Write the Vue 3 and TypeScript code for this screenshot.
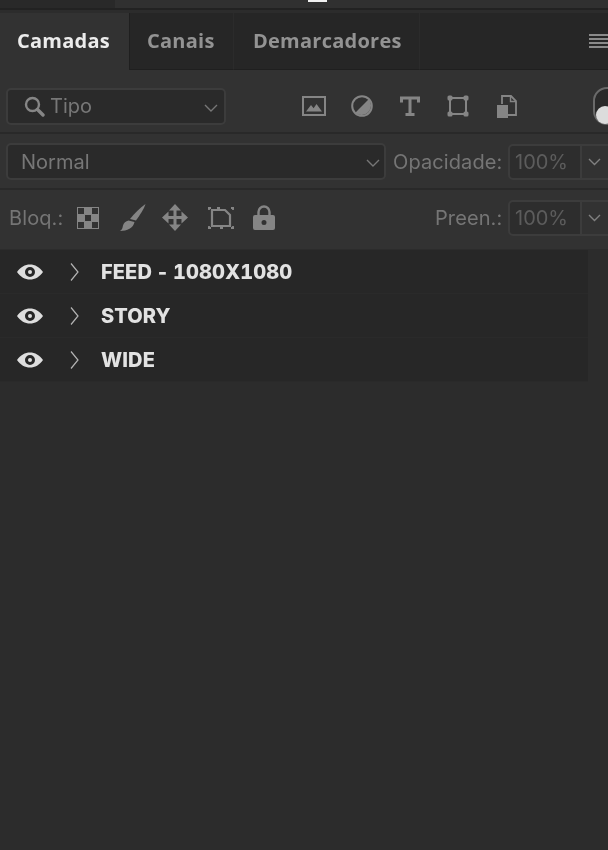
<script setup lang="ts">
// Layers panel: tabs, filter row, blend row, lock row and the layer list.
const tabs = [
  { label: "Camadas", width: 130, active: true },
  { label: "Canais", width: 104, active: false },
  { label: "Demarcadores", width: 186, active: false },
];

const layers = ["FEED - 1080X1080", "STORY", "WIDE"];

const checkerCells = [
  [0, 0], [14, 0], [7, 7], [0, 14], [14, 14],
];
</script>

<template>
  <div class="panel">
    <div class="top-strip">
      <div class="strip-dark" />
      <div class="strip-handle" />
    </div>

    <div class="tabbar">
      <div
        v-for="tab in tabs"
        :key="tab.label"
        class="tab"
        :class="{ active: tab.active }"
        :style="{ width: `${tab.width}px` }"
      >
        {{ tab.label }}
      </div>
      <div class="tab-rest">
        <div class="menu-icon"><i /><i /><i /><i /></div>
      </div>
    </div>

    <div class="row filter-row">
      <div class="select filter-select">
        <svg class="search" width="21" height="21" viewBox="0 0 21 21" fill="none">
          <circle cx="8.500" cy="8.500" r="6.500" stroke="#868686" stroke-width="2.400" />
          <path d="M13.500 13.500 19 19" stroke="#868686" stroke-width="3.400" stroke-linecap="round" />
        </svg>
        <span class="muted">Tipo</span>
        <svg class="chev" width="14" height="8" viewBox="0 0 14 8" fill="none">
          <path d="M1 1l6 6 6-6" stroke="#777" stroke-width="1.400" />
        </svg>
      </div>

      <div class="filter-icons">
        <svg width="24" height="20" viewBox="0 0 24 20" fill="none">
          <rect x="1" y="1" width="22" height="18" stroke="#858585" stroke-width="2" />
          <path d="M4 15.500 9 9l2.600 3.200L14.500 8l5.500 7.500z" fill="#858585" />
        </svg>
        <svg width="22" height="22" viewBox="0 0 22 22" fill="none">
          <circle cx="11" cy="11" r="9.800" stroke="#858585" stroke-width="2" />
          <path d="M17.700 4.300A9.500 9.500 0 0 1 4.300 17.700z" fill="#858585" />
        </svg>
        <svg width="20" height="20" viewBox="0 0 20 20" fill="none">
          <path d="M1.500 6.500V2h17v4.500M10 2v16.500M5.500 18.500h9" stroke="#858585" stroke-width="3" />
        </svg>
        <svg width="22" height="22" viewBox="0 0 22 22" fill="none">
          <rect x="3" y="3" width="16" height="16" stroke="#858585" stroke-width="2" />
          <rect x="0.500" y="0.500" width="5" height="5" rx="1.500" fill="#858585" />
          <rect x="16.500" y="0.500" width="5" height="5" rx="1.500" fill="#858585" />
          <rect x="0.500" y="16.500" width="5" height="5" rx="1.500" fill="#858585" />
          <rect x="16.500" y="16.500" width="5" height="5" rx="1.500" fill="#858585" />
        </svg>
        <svg width="20" height="23" viewBox="0 0 20 23" fill="none">
          <path d="M5 9V1h9l5 5v14h-8" stroke="#858585" stroke-width="1.800" />
          <path d="M13.500 1v5.500H19" stroke="#858585" stroke-width="1.400" />
          <rect x="0" y="10" width="11" height="13" fill="#858585" />
        </svg>
      </div>

      <div class="toggle"><div class="toggle-dot" /></div>
    </div>

    <div class="row blend-row">
      <div class="select blend-select">
        <span class="muted">Normal</span>
        <svg class="chev" width="14" height="8" viewBox="0 0 14 8" fill="none">
          <path d="M1 1l6 6 6-6" stroke="#777" stroke-width="1.400" />
        </svg>
      </div>
      <span class="label">Opacidade:</span>
      <div class="percent">
        <span class="percent-value">100%</span>
        <div class="percent-btn">
          <svg width="13" height="8" viewBox="0 0 13 8" fill="none">
            <path d="M1 1l5.500 5.500L12 1" stroke="#808080" stroke-width="1.400" />
          </svg>
        </div>
      </div>
    </div>

    <div class="row lock-row">
      <span class="label lock-label">Bloq.:</span>
      <div class="lock-icons">
        <svg width="22" height="22" viewBox="0 0 22 22">
          <rect width="22" height="22" fill="#858585" />
          <rect
            v-for="(c, i) in checkerCells"
            :key="i"
            :x="c[0] + 1"
            :y="c[1] + 1"
            width="6"
            height="6"
            fill="#323232"
          />
        </svg>
        <svg width="26" height="27" viewBox="0 0 26 27">
          <path d="M25.500 0C24 5 20 11 16 16.500L10 15C14 9.500 20 4 25.500 0z" fill="#858585" />
          <path d="M8.500 16.500 14.500 18C13.500 24 7 27 0 27c2.500-1.500 2.500-3.500 3-5.500.6-2.400 2.800-4.500 5.500-5z" fill="#858585" />
        </svg>
        <svg width="26" height="27" viewBox="0 0 26 27" fill="none">
          <path d="M13 3v21M3 13.500h20" stroke="#858585" stroke-width="3" />
          <path d="M13 0l6 6.500H7zM13 27l-6-6.500h12zM0 13.500 6.500 7.500v12zM26 13.500l-6.500 6v-12z" fill="#858585" />
        </svg>
        <svg width="28" height="24" viewBox="0 0 28 24" fill="none">
          <path d="M5 4h13l5 5v11H5z" stroke="#858585" stroke-width="2.200" />
          <path
            d="M1 2h3M1 22h3M24 2h3M24 22h3M10 2h3M2 2v2M26 2v2M2 20v2M26 20v2M13 22h3"
            stroke="#858585"
            stroke-width="1.800"
          />
        </svg>
        <svg width="22" height="25" viewBox="0 0 22 25" fill="none">
          <path d="M5.500 11V7a5.500 5.500 0 0 1 11 0v4" stroke="#858585" stroke-width="2.400" />
          <path
            fill-rule="evenodd"
            d="M2 10h18a2 2 0 0 1 2 2v11a2 2 0 0 1-2 2H2a2 2 0 0 1-2-2V12a2 2 0 0 1 2-2zm9 5a2.500 2.500 0 1 0 0 5 2.500 2.500 0 0 0 0-5z"
            fill="#858585"
          />
        </svg>
      </div>
      <span class="label preen-label">Preen.:</span>
      <div class="percent">
        <span class="percent-value">100%</span>
        <div class="percent-btn">
          <svg width="13" height="8" viewBox="0 0 13 8" fill="none">
            <path d="M1 1l5.500 5.500L12 1" stroke="#808080" stroke-width="1.400" />
          </svg>
        </div>
      </div>
    </div>

    <div class="layers">
      <div v-for="name in layers" :key="name" class="layer">
        <svg class="eye" width="26" height="16" viewBox="0 0 26 16">
          <path
            fill-rule="evenodd"
            d="M0 8C3.500 3 8 .5 13 .5S22.500 3 26 8c-3.500 5-8 7.500-13 7.500S3.500 13 0 8zm13-5a5 5 0 1 0 0 10 5 5 0 0 0 0-10z"
            fill="#dedede"
          />
          <circle cx="13" cy="8" r="2" fill="#dedede" />
        </svg>
        <svg class="twist" width="9" height="18" viewBox="0 0 9 18" fill="none">
          <path d="M1 .5 8 9l-7 8.500" stroke="#b4b4b4" stroke-width="1.200" />
        </svg>
        <span class="layer-name">{{ name }}</span>
      </div>
    </div>
  </div>
</template>

<style>
html,
body {
  margin: 0;
  background: #2c2c2c;
}
</style>

<style scoped>
.panel {
  width: 608px;
  height: 850px;
  overflow: hidden;
  background: #2c2c2c;
  font-family: Inter, "Open Sans", sans-serif;
  filter: blur(0.4px);
}

svg {
  flex: none;
}

.top-strip {
  height: 8px;
  display: flex;
  background: #303030;
  border-bottom: 2px solid #222;
  margin-bottom: 3px;
}
.strip-dark {
  width: 115px;
  background: #292929;
}
.strip-handle {
  width: 19px;
  height: 2px;
  margin-left: 193px;
  background: #f0f0f0;
}

.tabbar {
  height: 57px;
  display: flex;
  background: #262626;
}
.tab {
  box-sizing: border-box;
  flex: none;
  display: flex;
  align-items: center;
  padding-left: 17px;
  padding-bottom: 1px;
  border-right: 1px solid #2b2b2b;
  border-bottom: 1px solid #1f1f1f;
  font-family: "Open Sans", sans-serif;
  font-weight: 700;
  font-size: 20px;
  letter-spacing: 0.25px;
  color: #939393;
}
.tab:nth-child(3) {
  padding-left: 19px;
}
.tab.active {
  background: #323232;
  color: #ececec;
  border-right-color: #1f1f1f;
  border-bottom: 0;
  padding-bottom: 3px;
}
.tab-rest {
  flex: 1;
  display: flex;
  align-items: center;
  justify-content: flex-end;
  border-bottom: 1px solid #1f1f1f;
}
.menu-icon {
  width: 19px;
  display: flex;
  flex-direction: column;
  gap: 2px;
}
.menu-icon i {
  height: 2px;
  background: #8a8a8a;
}

.row {
  display: flex;
  align-items: center;
  background: #323232;
  border-bottom: 2px solid #292929;
  box-sizing: border-box;
}
.filter-row {
  height: 64px;
  padding: 10px 0 0 6px;
}
.blend-row {
  height: 56px;
  padding: 1px 0 0 6px;
}
.lock-row {
  height: 59px;
  padding: 0 0 4px 9px;
  border-bottom: 0;
}

.select {
  box-sizing: border-box;
  flex: none;
  display: flex;
  align-items: center;
  background: #2a2a2a;
  border: 2px solid #3c3c3c;
  border-radius: 5px;
  font-size: 20px;
}
.muted {
  color: #777;
}
.chev {
  margin: 3px 0 0 auto;
}
.filter-select {
  width: 220px;
  height: 37px;
  padding: 0 6px 0 16px;
}
.search {
  margin-right: 5px;
}
.filter-icons {
  flex: none;
  margin-left: 76px;
  width: 215px;
  display: flex;
  align-items: center;
  gap: 27px;
}
.filter-icons svg:first-child {
  margin-right: -2px;
}
.filter-icons svg:last-child {
  margin-left: 1px;
}
.toggle {
  position: relative;
  flex: none;
  box-sizing: border-box;
  width: 30px;
  height: 38px;
  margin-left: 76px;
  border: 2px solid #6a6a6a;
  border-radius: 14px;
  background: #2a2a2a;
}
.toggle-dot {
  position: absolute;
  left: 1px;
  bottom: -1px;
  width: 18px;
  height: 18px;
  border-radius: 50%;
  background: #dcdcdc;
}

.blend-select {
  width: 380px;
  height: 37px;
  padding: 0 4px 0 13px;
}
.label {
  font-size: 20px;
  letter-spacing: 0.1px;
  color: #757575;
  white-space: nowrap;
}
.blend-row .label {
  margin-left: 7px;
  width: 115px;
  flex: none;
}
.percent {
  flex: none;
  display: flex;
  box-sizing: border-box;
  width: 110px;
  height: 36px;
  background: #2d2d2d;
  border: 2px solid #3c3c3c;
  border-radius: 5px;
}
.percent-value {
  flex: none;
  width: 72px;
  box-sizing: border-box;
  padding-left: 5px;
  font-size: 20px;
  line-height: 32px;
  color: #5c5c5c;
  border-right: 2px solid #3c3c3c;
}
.percent-btn {
  flex: 1;
  display: flex;
  align-items: center;
  padding-left: 6px;
  background: #323232;
  border-radius: 0 5px 5px 0;
}

.lock-label {
  width: 68px;
  flex: none;
}
.lock-icons {
  flex: none;
  width: 198px;
  display: flex;
  align-items: center;
  justify-content: space-between;
}
.lock-icons svg:nth-child(2) {
  margin: 0 -2px 0 2px;
}
.preen-label {
  width: 73px;
  flex: none;
  margin-left: 160px;
}

.layers {
  width: 588px;
  padding-top: 1px;
}
.layer {
  box-sizing: border-box;
  height: 44px;
  display: flex;
  align-items: center;
  background: #272727;
  border-bottom: 1px solid #2a2a2a;
  padding-left: 17px;
}
.twist {
  margin-left: 27px;
}
.layer-name {
  margin-left: 22px;
  font-size: 20px;
  font-weight: 800;
  font-variant-numeric: tabular-nums;
  letter-spacing: 0.1px;
  word-spacing: -1.500px;
  color: #e2e2e2;
  white-space: nowrap;
}
</style>
